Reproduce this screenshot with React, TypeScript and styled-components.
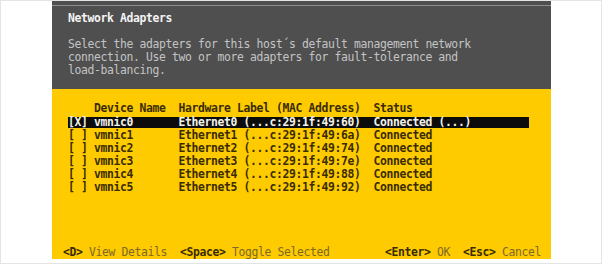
import React from "react";
import styled, { createGlobalStyle } from "styled-components";

const Global = createGlobalStyle`
  html, body { margin: 0; padding: 0; background: #ffffff; }
  body { font-family: "DejaVu Sans Mono", "Liberation Mono", monospace; }
`;

const Page = styled.div`
  width: 602px;
  height: 264px;
  box-sizing: border-box;
  border: 1px solid #e4e4e4;
  background: #ffffff;
  padding-left: 51px;
`;

const Screen = styled.div`
  width: 499px;
  height: 258px;
  display: flex;
  flex-direction: column;
  font-family: "DejaVu Sans Mono", "Liberation Mono", monospace;
  font-size: 11.4px;
  letter-spacing: -0.36px;
  line-height: 13px;
`;

const TopPanel = styled.div`
  height: 88px;
  flex: none;
  background: #4f4f4f;
  padding: 0 16px;
  box-sizing: border-box;
`;

const TopRule = styled.div`
  margin: 0 -16px;
  margin-top: 4px;
  height: 1px;
  background: #8e8e8e;
`;

const Title = styled.div`
  margin-top: 6px;
  color: #f4f4f4;
  font-weight: bold;
  white-space: pre;
`;

const Description = styled.div`
  margin-top: 13px;
  color: #c4c4c4;
  white-space: pre;
`;

const BottomPanel = styled.div`
  flex: 1;
  background: #fdcb00;
  display: flex;
  flex-direction: column;
  padding: 13px 10px 0 16px;
  box-sizing: border-box;
`;

const Table = styled.div`
  display: flex;
  flex-direction: column;
  width: 461px;
`;

const Row = styled.div<{ $selected?: boolean; $header?: boolean }>`
  display: grid;
  grid-template-columns: 26px 84.5px 195px 1fr;
  height: 11px;
  line-height: 11px;
  margin: 1px 0;
  margin-bottom: ${(p) => (p.$header ? "2px" : "1px")};
  white-space: pre;
  font-weight: bold;
  color: ${(p) => (p.$selected ? "#f2f2ea" : "#3a2c00")};
  background: ${(p) => (p.$selected ? "#0c0c0c" : "transparent")};
`;

const Cell = styled.span`
  overflow: visible;
`;

const Footer = styled.div`
  margin-top: auto;
  margin-left: -5px;
  height: 13px;
  display: flex;
  justify-content: space-between;
  white-space: pre;
`;

const FooterGroup = styled.div`
  display: flex;
  gap: 13px;
`;

const Hint = styled.span``;

const Key = styled.span`
  color: #3a2c00;
  font-weight: bold;
`;

const Label = styled.span`
  color: #806828;
`;

const adapters = [
  { sel: true, dev: "vmnic0", hw: "Ethernet0 (...c:29:1f:49:60)", status: "Connected (...)" },
  { sel: false, dev: "vmnic1", hw: "Ethernet1 (...c:29:1f:49:6a)", status: "Connected" },
  { sel: false, dev: "vmnic2", hw: "Ethernet2 (...c:29:1f:49:74)", status: "Connected" },
  { sel: false, dev: "vmnic3", hw: "Ethernet3 (...c:29:1f:49:7e)", status: "Connected" },
  { sel: false, dev: "vmnic4", hw: "Ethernet4 (...c:29:1f:49:88)", status: "Connected" },
  { sel: false, dev: "vmnic5", hw: "Ethernet5 (...c:29:1f:49:92)", status: "Connected" },
];

export default function App() {
  return (
    <>
      <Global />
      <Page>
        <Screen>
          <TopPanel>
            <TopRule />
            <Title>Network Adapters</Title>
            <Description>
              {"Select the adapters for this host\u00b4s default management network\nconnection. Use two or more adapters for fault-tolerance and\nload-balancing."}
            </Description>
          </TopPanel>
          <BottomPanel>
            <Table>
              <Row $header>
                <Cell />
                <Cell>Device Name</Cell>
                <Cell>Hardware Label (MAC Address)</Cell>
                <Cell>Status</Cell>
              </Row>
              {adapters.map((a) => (
                <Row key={a.dev} $selected={a.sel}>
                  <Cell>{a.sel ? "[X]" : "[ ]"}</Cell>
                  <Cell>{a.dev}</Cell>
                  <Cell>{a.hw}</Cell>
                  <Cell>{a.status}</Cell>
                </Row>
              ))}
            </Table>
            <Footer>
              <FooterGroup>
                <Hint>
                  <Key>{"<D>"}</Key>
                  <Label> View Details</Label>
                </Hint>
                <Hint>
                  <Key>{"<Space>"}</Key>
                  <Label> Toggle Selected</Label>
                </Hint>
              </FooterGroup>
              <FooterGroup>
                <Hint>
                  <Key>{"<Enter>"}</Key>
                  <Label> OK</Label>
                </Hint>
                <Hint>
                  <Key>{"<Esc>"}</Key>
                  <Label> Cancel</Label>
                </Hint>
              </FooterGroup>
            </Footer>
          </BottomPanel>
        </Screen>
      </Page>
    </>
  );
}
